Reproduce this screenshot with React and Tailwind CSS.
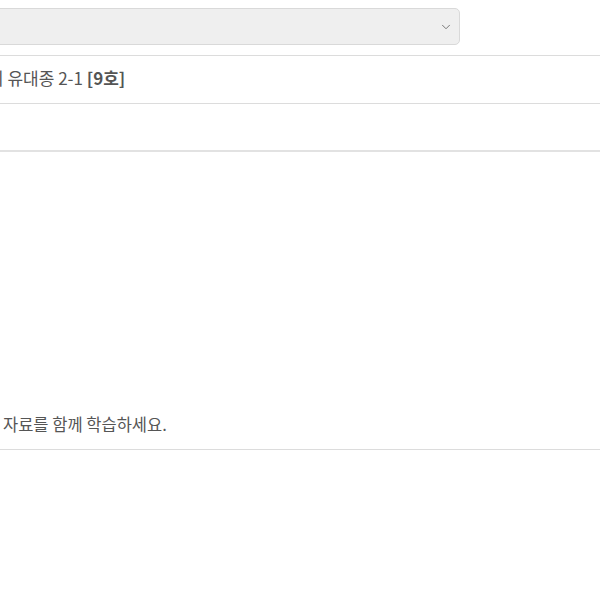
import { ChevronDown } from 'lucide-react';

function App() {
  return (
    <div
      className="w-[600px] h-[600px] bg-white overflow-hidden text-[#555]"
      style={{ fontFamily: '"Noto Sans CJK KR", "Noto Sans", sans-serif' }}
    >
      {/* class select */}
      <div className="pt-2 pr-[140px] -ml-4">
        <div className="h-[37px] bg-[#efefef] border border-[#d9d9d9] rounded-[5px] flex items-center justify-end pr-[6px]">
          <ChevronDown className="w-[14px] h-[14px] text-[#666]" strokeWidth={1.5} />
        </div>
      </div>

      <div className="mt-[10px] border-t border-[#dcdcdc]">
        <div className="h-[47px] flex items-center pb-[4px] text-[17px] -ml-[12px] leading-none whitespace-nowrap">
          <span>이 유대종 2-1&nbsp;</span>
          <b className="font-bold">[9호]</b>
        </div>
        <div className="h-[47px] border-t border-[#dcdcdc]" />
        <div className="h-[299px] border-t-2 border-[#e2e2e2] flex flex-col justify-end pb-[17px]">
          <p className="text-[16.5px] leading-none pl-[3px]">자료를 함께 학습하세요.</p>
        </div>
        <div className="border-t border-[#dcdcdc]" />
      </div>
    </div>
  );
}

export default App;
